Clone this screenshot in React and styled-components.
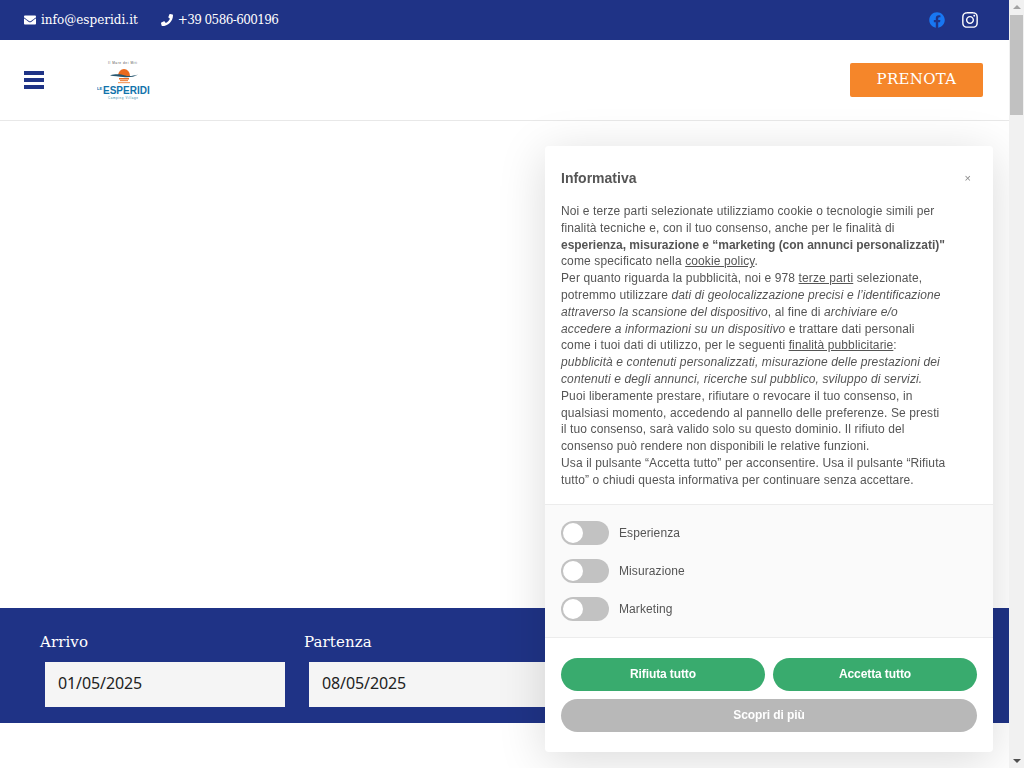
import React from "react";
import styled, { createGlobalStyle } from "styled-components";
import { FaEnvelope, FaPhone, FaFacebook, FaInstagram } from "react-icons/fa";

const GlobalStyle = createGlobalStyle`
  html, body {
    margin: 0;
    padding: 0;
    background: #fff;
    overflow: hidden;
  }
  * {
    box-sizing: border-box;
  }
`;

const serif = `"DejaVu Serif", serif`;
const navy = "#1f3386";

const Logo = () => (
  <LogoBox>
    <svg width="54" height="40" viewBox="0 0 54 40" fontFamily="Liberation Sans, sans-serif">
      <text x="11" y="4" fontSize="3.200" fill="#555" textLength="29">
        Il Mare dei Miti
      </text>
      <path d="M21 16 a6 7 0 0 1 12 0 z" fill="#ea6a1f" />
      <path d="M13 15.500 C19 13.500 24 14.500 28 15.500 C32 16.500 36 16 41 14.500 C37 17.500 30 17.500 26 17 C22 16.500 17 16 13 15.500 z" fill="#27566f" />
      <rect x="22" y="18" width="10" height="1.500" fill="#ea6a1f" />
      <rect x="23" y="20" width="8" height="1.200" fill="#f08a4a" />
      <rect x="21" y="22" width="12" height="1.200" fill="#f3a06a" />
      <text x="0" y="29.500" fontSize="4" fontWeight="700" fill="#1273ab">LE</text>
      <text x="6" y="34" fontSize="10" fontWeight="700" fill="#1273ab">
        ESPERIDI
      </text>
      <text x="11" y="39" fontSize="3" fill="#2f7f9f" textLength="30">
        Camping Village
      </text>
    </svg>
  </LogoBox>
);

const App = () => {
  return (
    <>
      <GlobalStyle />
      <Page>
        <TopBar>
          <Contacts>
            <Contact>
              <FaEnvelope size={12} />
              info@esperidi.it
            </Contact>
            <Contact $tight>
              <FaPhone size={12} />
              +39 0586-600196
            </Contact>
          </Contacts>
          <Socials>
            <FaFacebook size={16} color="#1877f2" />
            <FaInstagram size={18} color="#fff" />
          </Socials>
        </TopBar>
        <Header>
          <HeaderLeft>
            <MenuIcon width="20" height="18" viewBox="0 0 20 18">
              <rect y="0" width="20" height="4" />
              <rect y="7" width="20" height="4" />
              <rect y="14" width="20" height="4" />
            </MenuIcon>
            <Logo />
          </HeaderLeft>
          <BookButton>PRENOTA</BookButton>
        </Header>
        <Hero />
        <BookingBar>
          <Field>
            <FieldLabel>Arrivo</FieldLabel>
            <DateInput>01/05/2025</DateInput>
          </Field>
          <Field>
            <FieldLabel>Partenza</FieldLabel>
            <DateInput>08/05/2025</DateInput>
          </Field>
        </BookingBar>
      </Page>

      <Notice>
        <NoticeHead>
          <NoticeTitle>Informativa</NoticeTitle>
          <CloseButton>×</CloseButton>
        </NoticeHead>
        <NoticeText>
          Noi e terze parti selezionate utilizziamo cookie o tecnologie simili per finalità tecniche e, con il tuo
          consenso, anche per le finalità di <b>esperienza, misurazione e “marketing (con annunci personalizzati)"</b>{" "}
          come specificato nella <u>cookie policy</u>.
          <br />
          Per quanto riguarda la pubblicità, noi e 978 <u>terze parti</u> selezionate, potremmo utilizzare{" "}
          <i>dati di geolocalizzazione precisi e l’identificazione attraverso la scansione del dispositivo</i>, al fine
          di <i>archiviare e/o accedere a informazioni su un dispositivo</i> e trattare dati personali come i tuoi dati
          di utilizzo, per le seguenti <u>finalità pubblicitarie</u>:{" "}
          <i>
            pubblicità e contenuti personalizzati, misurazione delle prestazioni dei contenuti e degli annunci, ricerche
            sul pubblico, sviluppo di servizi.
          </i>
          <br />
          Puoi liberamente prestare, rifiutare o revocare il tuo consenso, in qualsiasi momento, accedendo al pannello
          delle preferenze. Se presti il tuo consenso, sarà valido solo su questo dominio. Il rifiuto del consenso può
          rendere non disponibili le relative funzioni.
          <br />
          Usa il pulsante “Accetta tutto” per acconsentire. Usa il pulsante “Rifiuta tutto” o chiudi questa informativa
          per continuare senza accettare.
        </NoticeText>
        <Purposes>
          {["Esperienza", "Misurazione", "Marketing"].map((name) => (
            <Purpose key={name}>
              <Toggle />
              {name}
            </Purpose>
          ))}
        </Purposes>
        <Actions>
          <ActionButton>Rifiuta tutto</ActionButton>
          <ActionButton>Accetta tutto</ActionButton>
          <ActionButton $wide>Scopri di più</ActionButton>
        </Actions>
      </Notice>

      <Scrollbar>
        <ScrollArrow />
        <ScrollThumb />
        <ScrollArrow $down />
      </Scrollbar>
    </>
  );
};

export default App;

const Page = styled.div`
  width: 1009px;
  height: 768px;
  background: #fff;
`;

const TopBar = styled.div`
  height: 40px;
  padding: 0 30px 0 24px;
  background: ${navy};
  display: flex;
  align-items: center;
  justify-content: space-between;
`;

const Contacts = styled.div`
  display: flex;
  gap: 23px;
`;

const Contact = styled.div`
  display: flex;
  align-items: center;
  gap: 5px;
  color: #fff;
  font-family: ${serif};
  font-size: 12px;
  letter-spacing: ${(props) => (props.$tight ? "-0.6px" : "0")};
  svg {
    flex-shrink: 0;
  }
`;

const Socials = styled.div`
  display: flex;
  align-items: center;
  gap: 16px;
`;

const Header = styled.div`
  height: 81px;
  padding: 0 26px 0 24px;
  border-bottom: 1px solid #e8e8e8;
  display: flex;
  align-items: center;
  justify-content: space-between;
`;

const HeaderLeft = styled.div`
  display: flex;
  align-items: center;
  gap: 53px;
`;

const MenuIcon = styled.svg`
  display: block;
  fill: ${navy};
`;

const LogoBox = styled.div`
  display: flex;
  width: 54px;
  height: 40px;
`;

const BookButton = styled.div`
  width: 133px;
  height: 34px;
  padding-bottom: 3px;
  background: #f5862a;
  border-radius: 2px;
  color: #fff;
  font-family: ${serif};
  font-size: 15px;
  letter-spacing: 0.3px;
  display: flex;
  align-items: center;
  justify-content: center;
`;

const Hero = styled.div`
  height: 487px;
`;

const BookingBar = styled.div`
  height: 115px;
  padding: 24px 0 0 40px;
  background: ${navy};
  display: flex;
  overflow: hidden;
`;

const Field = styled.div`
  width: 264px;
  flex-shrink: 0;
  display: flex;
  flex-direction: column;
`;

const FieldLabel = styled.div`
  height: 30px;
  line-height: 20px;
  color: #fff;
  font-family: ${serif};
  font-size: 15px;
  letter-spacing: 0.1px;
`;

const DateInput = styled.div`
  width: 240px;
  height: 45px;
  margin-left: 5px;
  padding: 0 0 3px 13px;
  background: #f5f5f5;
  color: #222;
  font-family: "Noto Sans", sans-serif;
  font-size: 16px;
  letter-spacing: -0.1px;
  display: flex;
  align-items: center;
`;

const Notice = styled.div`
  position: fixed;
  left: 545px;
  top: 146px;
  width: 448px;
  height: 606px;
  background: #fff;
  border-radius: 4px;
  box-shadow: 0 8px 48px rgba(0, 0, 0, 0.15);
  color: #555;
  font-family: "Liberation Sans", Arial, sans-serif;
  font-size: 12px;
  display: flex;
  flex-direction: column;
`;

const NoticeHead = styled.div`
  height: 57px;
  padding: 15px 22px 8px 16px;
  display: flex;
  align-items: center;
  justify-content: space-between;
`;

const NoticeTitle = styled.div`
  font-size: 14px;
  font-weight: 700;
`;

const CloseButton = styled.div`
  color: #8a8a8a;
  font-size: 11px;
`;

const NoticeText = styled.div`
  width: 418px;
  height: 301px;
  padding: 0 16px;
  line-height: 16.8px;
  letter-spacing: 0.12px;
  b {
    letter-spacing: -0.03px;
  }
`;

const Purposes = styled.div`
  height: 134px;
  padding: 16px;
  background: #fafafa;
  border-top: 1px solid #ececec;
  border-bottom: 1px solid #ececec;
  display: flex;
  flex-direction: column;
  gap: 14px;
`;

const Purpose = styled.div`
  display: flex;
  align-items: center;
  gap: 10px;
  letter-spacing: 0.1px;
`;

const Toggle = styled.div`
  position: relative;
  width: 48px;
  height: 24px;
  border-radius: 12px;
  background: #c2c2c2;
  &::before {
    content: "";
    position: absolute;
    left: 2px;
    top: 2px;
    width: 20px;
    height: 20px;
    border-radius: 50%;
    background: #fff;
  }
`;

const Actions = styled.div`
  padding: 20px 16px;
  display: grid;
  grid-template-columns: 1fr 1fr;
  gap: 8px;
`;

const ActionButton = styled.div`
  grid-column: ${(props) => (props.$wide ? "1 / 3" : "auto")};
  height: 33px;
  padding-bottom: 2px;
  border-radius: 17px;
  background: ${(props) => (props.$wide ? "#b8b8b8" : "#39ab6e")};
  color: #fff;
  font-weight: 700;
  letter-spacing: -0.1px;
  display: flex;
  align-items: center;
  justify-content: center;
`;

const Scrollbar = styled.div`
  position: fixed;
  right: 0;
  top: 0;
  width: 15px;
  height: 768px;
  background: #f1f1f1;
  display: flex;
  flex-direction: column;
  align-items: center;
  justify-content: space-between;
`;

const ScrollThumb = styled.div`
  position: absolute;
  left: 1px;
  top: 15px;
  width: 13px;
  height: 100px;
  background: #c1c1c1;
`;

const ScrollArrow = styled.div`
  margin: 5px 0;
  width: 0;
  height: 0;
  border-left: 4px solid transparent;
  border-right: 4px solid transparent;
  border-${(props) => (props.$down ? "top" : "bottom")}: 4px solid ${(props) => (props.$down ? "#505050" : "#a3a3a3")};
`;
